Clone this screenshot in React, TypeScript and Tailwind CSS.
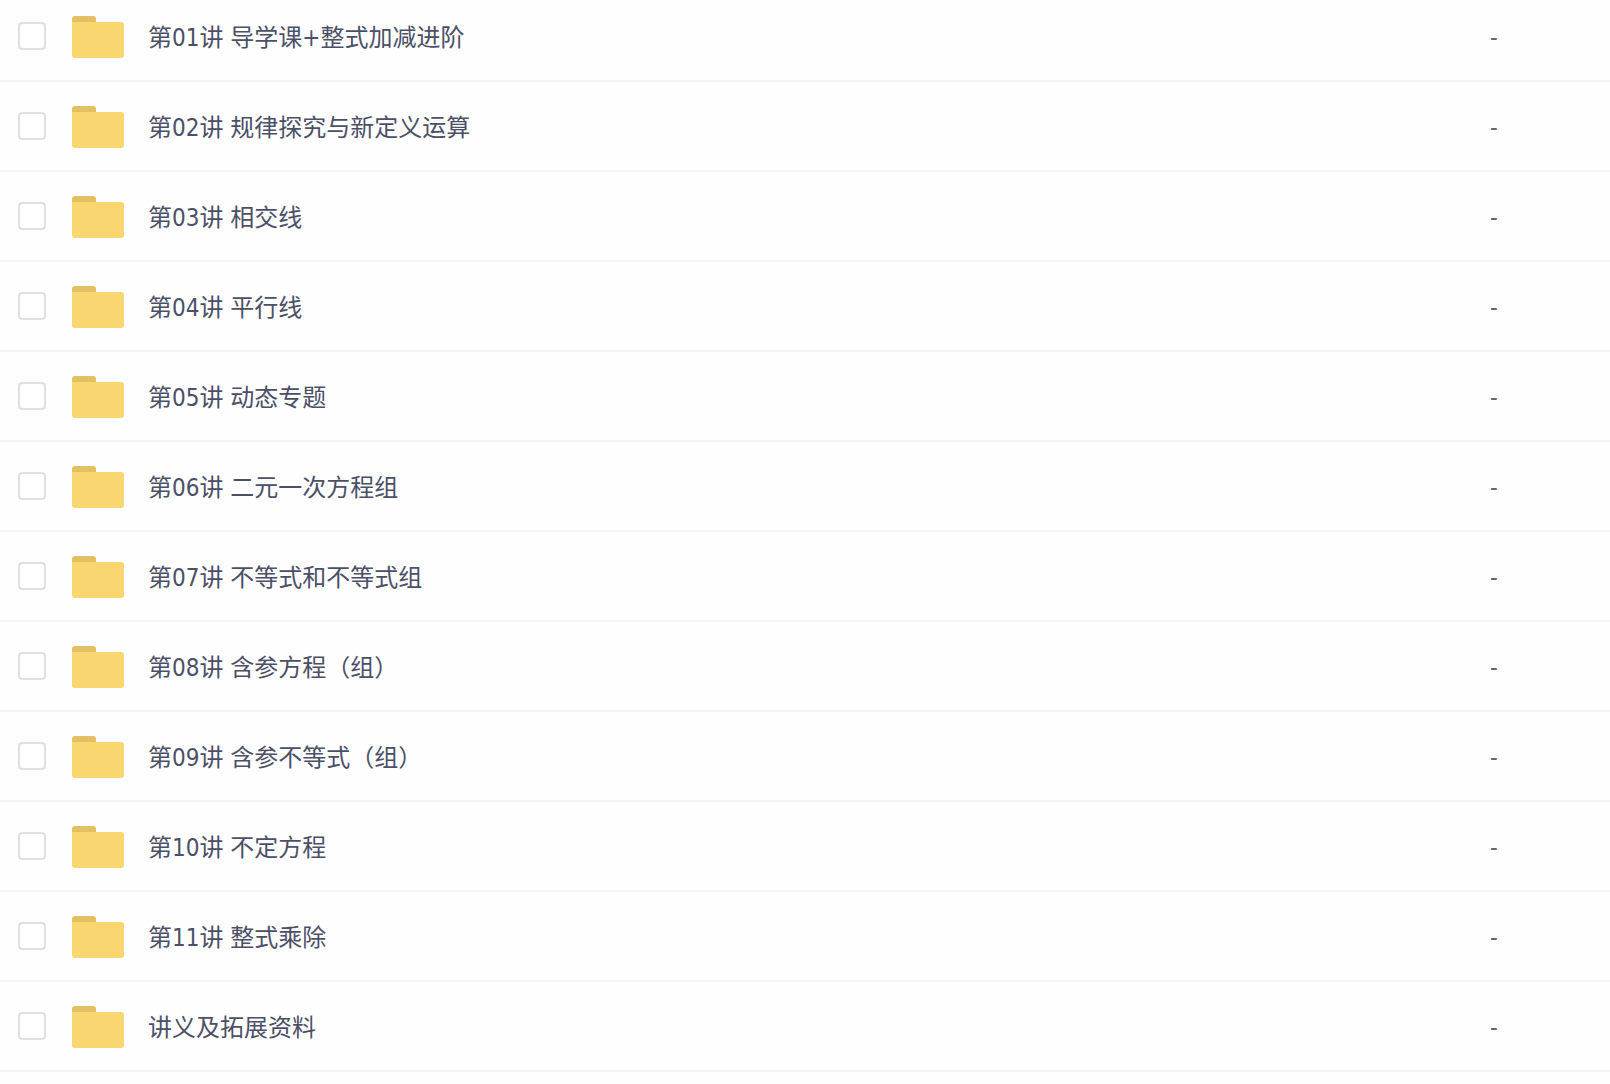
const names = [
  '第01讲 导学课+整式加减进阶',
  '第02讲 规律探究与新定义运算',
  '第03讲 相交线',
  '第04讲 平行线',
  '第05讲 动态专题',
  '第06讲 二元一次方程组',
  '第07讲 不等式和不等式组',
  '第08讲 含参方程（组）',
  '第09讲 含参不等式（组）',
  '第10讲 不定方程',
  '第11讲 整式乘除',
  '讲义及拓展资料',
];

function FolderIcon() {
  return (
    <svg className="h-[42px] w-[52px] shrink-0" viewBox="0 0 52 42" aria-hidden="true">
      <path d="M0 10V3a3 3 0 0 1 3-3h18a3 3 0 0 1 3 3v7z" fill="#e3c062" />
      <path d="M0 6H49a3 3 0 0 1 3 3V39a3 3 0 0 1-3 3H3a3 3 0 0 1-3-3z" fill="#f9d66f" />
    </svg>
  );
}

function Row({ name, id }: { name: string; id: string }) {
  return (
    <li className="flex h-[90px] items-center border-b-2 border-[#f3f4f9] pl-[18px]">
      <input
        id={id}
        type="checkbox"
        className="size-[28px] shrink-0 appearance-none rounded-[4px] border-2 border-[#dfe0e7] bg-white checked:bg-[#f9d66f]"
      />
      <label htmlFor={id} className="ml-[26px] flex grow items-center gap-[24px] whitespace-nowrap pt-[2px]">
        <FolderIcon />
        <span className="pt-[2px]">{name}</span>
      </label>
      <span className="w-[120px] shrink-0 pt-1 text-[#666666]">-</span>
    </li>
  );
}

export default function App() {
  return (
    <main className="min-h-screen overflow-hidden bg-[#fefefe] font-['DejaVu_Sans_Condensed','Noto_Sans_CJK_SC',sans-serif] text-[24px] leading-[36px] text-[#4b5066]">
      <ul className="-mt-[8px]">
        {names.map((name, i) => (
          <Row key={name} name={name} id={`item-${i}`} />
        ))}
      </ul>
    </main>
  );
}
